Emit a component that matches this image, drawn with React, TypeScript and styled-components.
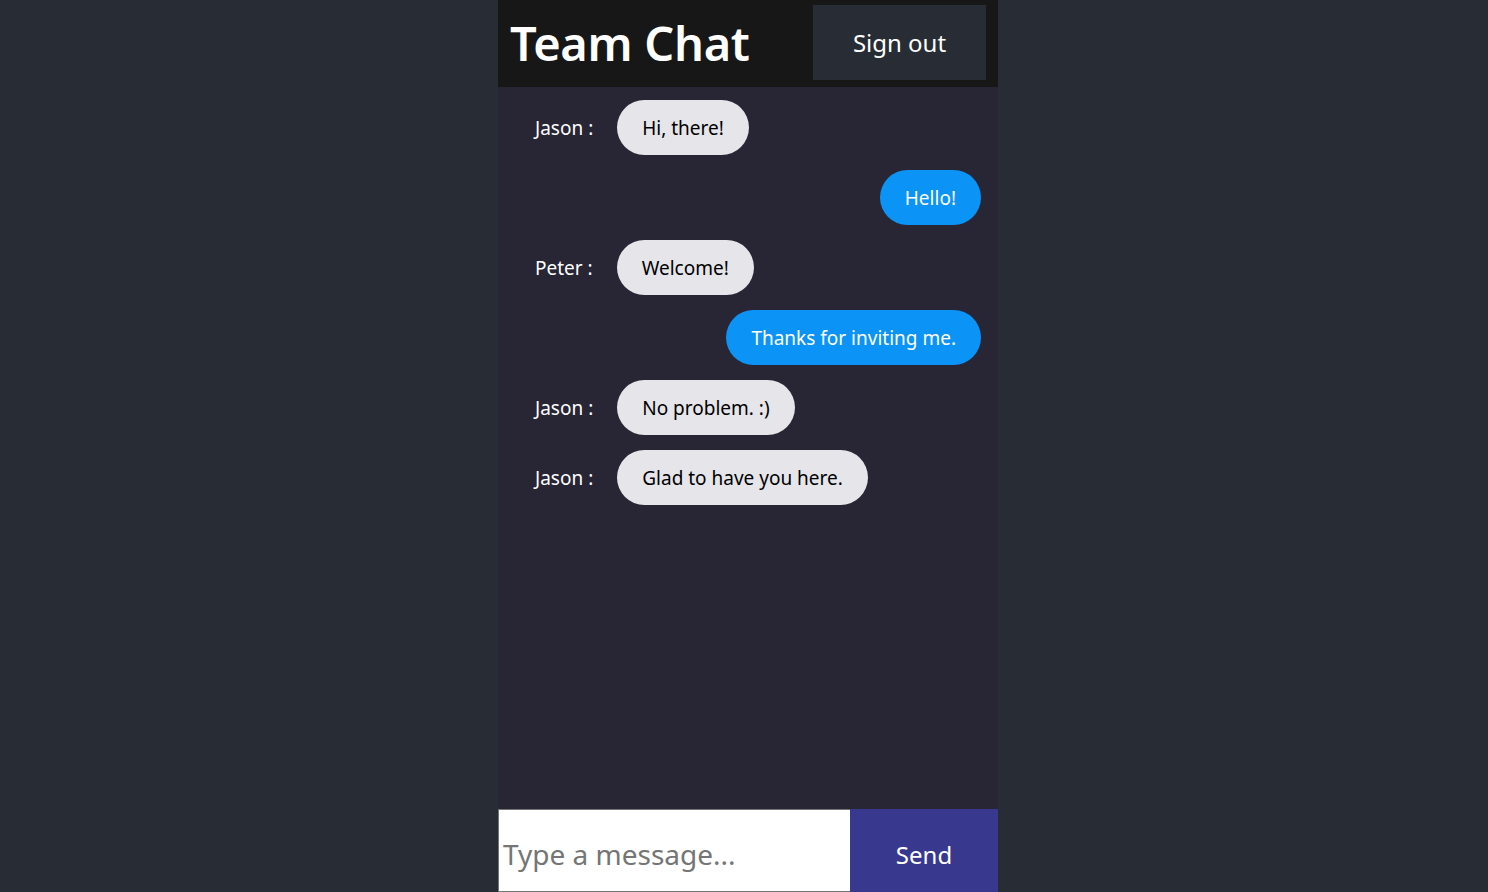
import React, { useState } from 'react';
import styled, { createGlobalStyle } from 'styled-components';

const GlobalStyle = createGlobalStyle`
  html, body {
    margin: 0;
    height: 100%;
    background-color: #282c34;
    font-family: "Noto Sans", "Open Sans", sans-serif;
  }
  body {
    padding: 0 0 0 8px;
    box-sizing: border-box;
  }
  #root {
    height: 100%;
  }
`;

const Page = styled.div`
  max-width: 500px;
  height: 100vh;
  margin: 0 auto;
  display: flex;
  flex-direction: column;
  background-color: #282535;
`;

const Header = styled.header`
  height: 87px;
  flex-shrink: 0;
  box-sizing: border-box;
  padding: 5px 12px 7px 13px;
  background-color: #181717;
  display: flex;
  align-items: center;
  justify-content: space-between;
  color: white;
`;

const Title = styled.h1`
  margin: 0 0 0 -1px;
  font-size: 47px;
  font-weight: 600;
  letter-spacing: -0.3px;
`;

const SignOutButton = styled.button`
  width: 173px;
  height: 75px;
  align-self: flex-start;
  background-color: #282c34;
  border: none;
  color: white;
  font-family: inherit;
  font-size: 24px;
  cursor: pointer;
`;

const Messages = styled.main`
  flex: 1;
  overflow-y: auto;
  padding: 13px 17px 0 37px;
  display: flex;
  flex-direction: column;
  gap: 15px;
`;

const Row = styled.div<{ $sent?: boolean }>`
  display: flex;
  align-items: center;
  justify-content: ${(p) => (p.$sent ? 'flex-end' : 'flex-start')};
`;

const Author = styled.span`
  color: white;
  font-size: 19px;
  margin-right: 24px;
  padding-top: 1px;
`;

const Bubble = styled.p<{ $sent?: boolean }>`
  margin: 0;
  padding: 15px 25px 13px;
  line-height: 27px;
  font-size: 19px;
  border-radius: 28px;
  background: ${(p) => (p.$sent ? '#0b93f6' : '#e5e5ea')};
  color: ${(p) => (p.$sent ? 'white' : 'black')};
`;

const Form = styled.form`
  height: 83px;
  flex-shrink: 0;
  display: flex;
`;

const Input = styled.input`
  flex: 1;
  min-width: 0;
  box-sizing: border-box;
  border: 1px solid #767676;
  border-right: none;
  padding: 6px 4px 0;
  font-family: inherit;
  font-size: 28px;
  color: black;
  background: white;
  outline: none;

  &::placeholder {
    color: #757575;
  }
`;

const SendButton = styled.button`
  width: 148px;
  border: none;
  padding: 8px 0 0;
  background-color: #38388f;
  color: white;
  font-family: inherit;
  font-size: 24px;
  cursor: pointer;
`;

type Message = { id: number; author?: string; text: string; sent?: boolean };

const initialMessages: Message[] = [
  { id: 1, author: 'Jason', text: 'Hi, there!' },
  { id: 2, text: 'Hello!', sent: true },
  { id: 3, author: 'Peter', text: 'Welcome!' },
  { id: 4, text: 'Thanks for inviting me.', sent: true },
  { id: 5, author: 'Jason', text: 'No problem. :)' },
  { id: 6, author: 'Jason', text: 'Glad to have you here.' },
];

const App: React.FC = () => {
  const [messages, setMessages] = useState<Message[]>(initialMessages);
  const [draft, setDraft] = useState('');

  const handleSend = (e: React.FormEvent) => {
    e.preventDefault();
    if (!draft.trim()) return;
    setMessages([...messages, { id: Date.now(), text: draft, sent: true }]);
    setDraft('');
  };

  return (
    <>
      <GlobalStyle />
      <Page>
        <Header>
          <Title>Team Chat</Title>
          <SignOutButton>Sign out</SignOutButton>
        </Header>
        <Messages>
          {messages.map((m) => (
            <Row key={m.id} $sent={m.sent}>
              {!m.sent && <Author>{m.author} :</Author>}
              <Bubble $sent={m.sent}>{m.text}</Bubble>
            </Row>
          ))}
        </Messages>
        <Form onSubmit={handleSend}>
          <Input
            value={draft}
            onChange={(e) => setDraft(e.target.value)}
            placeholder="Type a message..."
          />
          <SendButton type="submit">Send</SendButton>
        </Form>
      </Page>
    </>
  );
};

export default App;
